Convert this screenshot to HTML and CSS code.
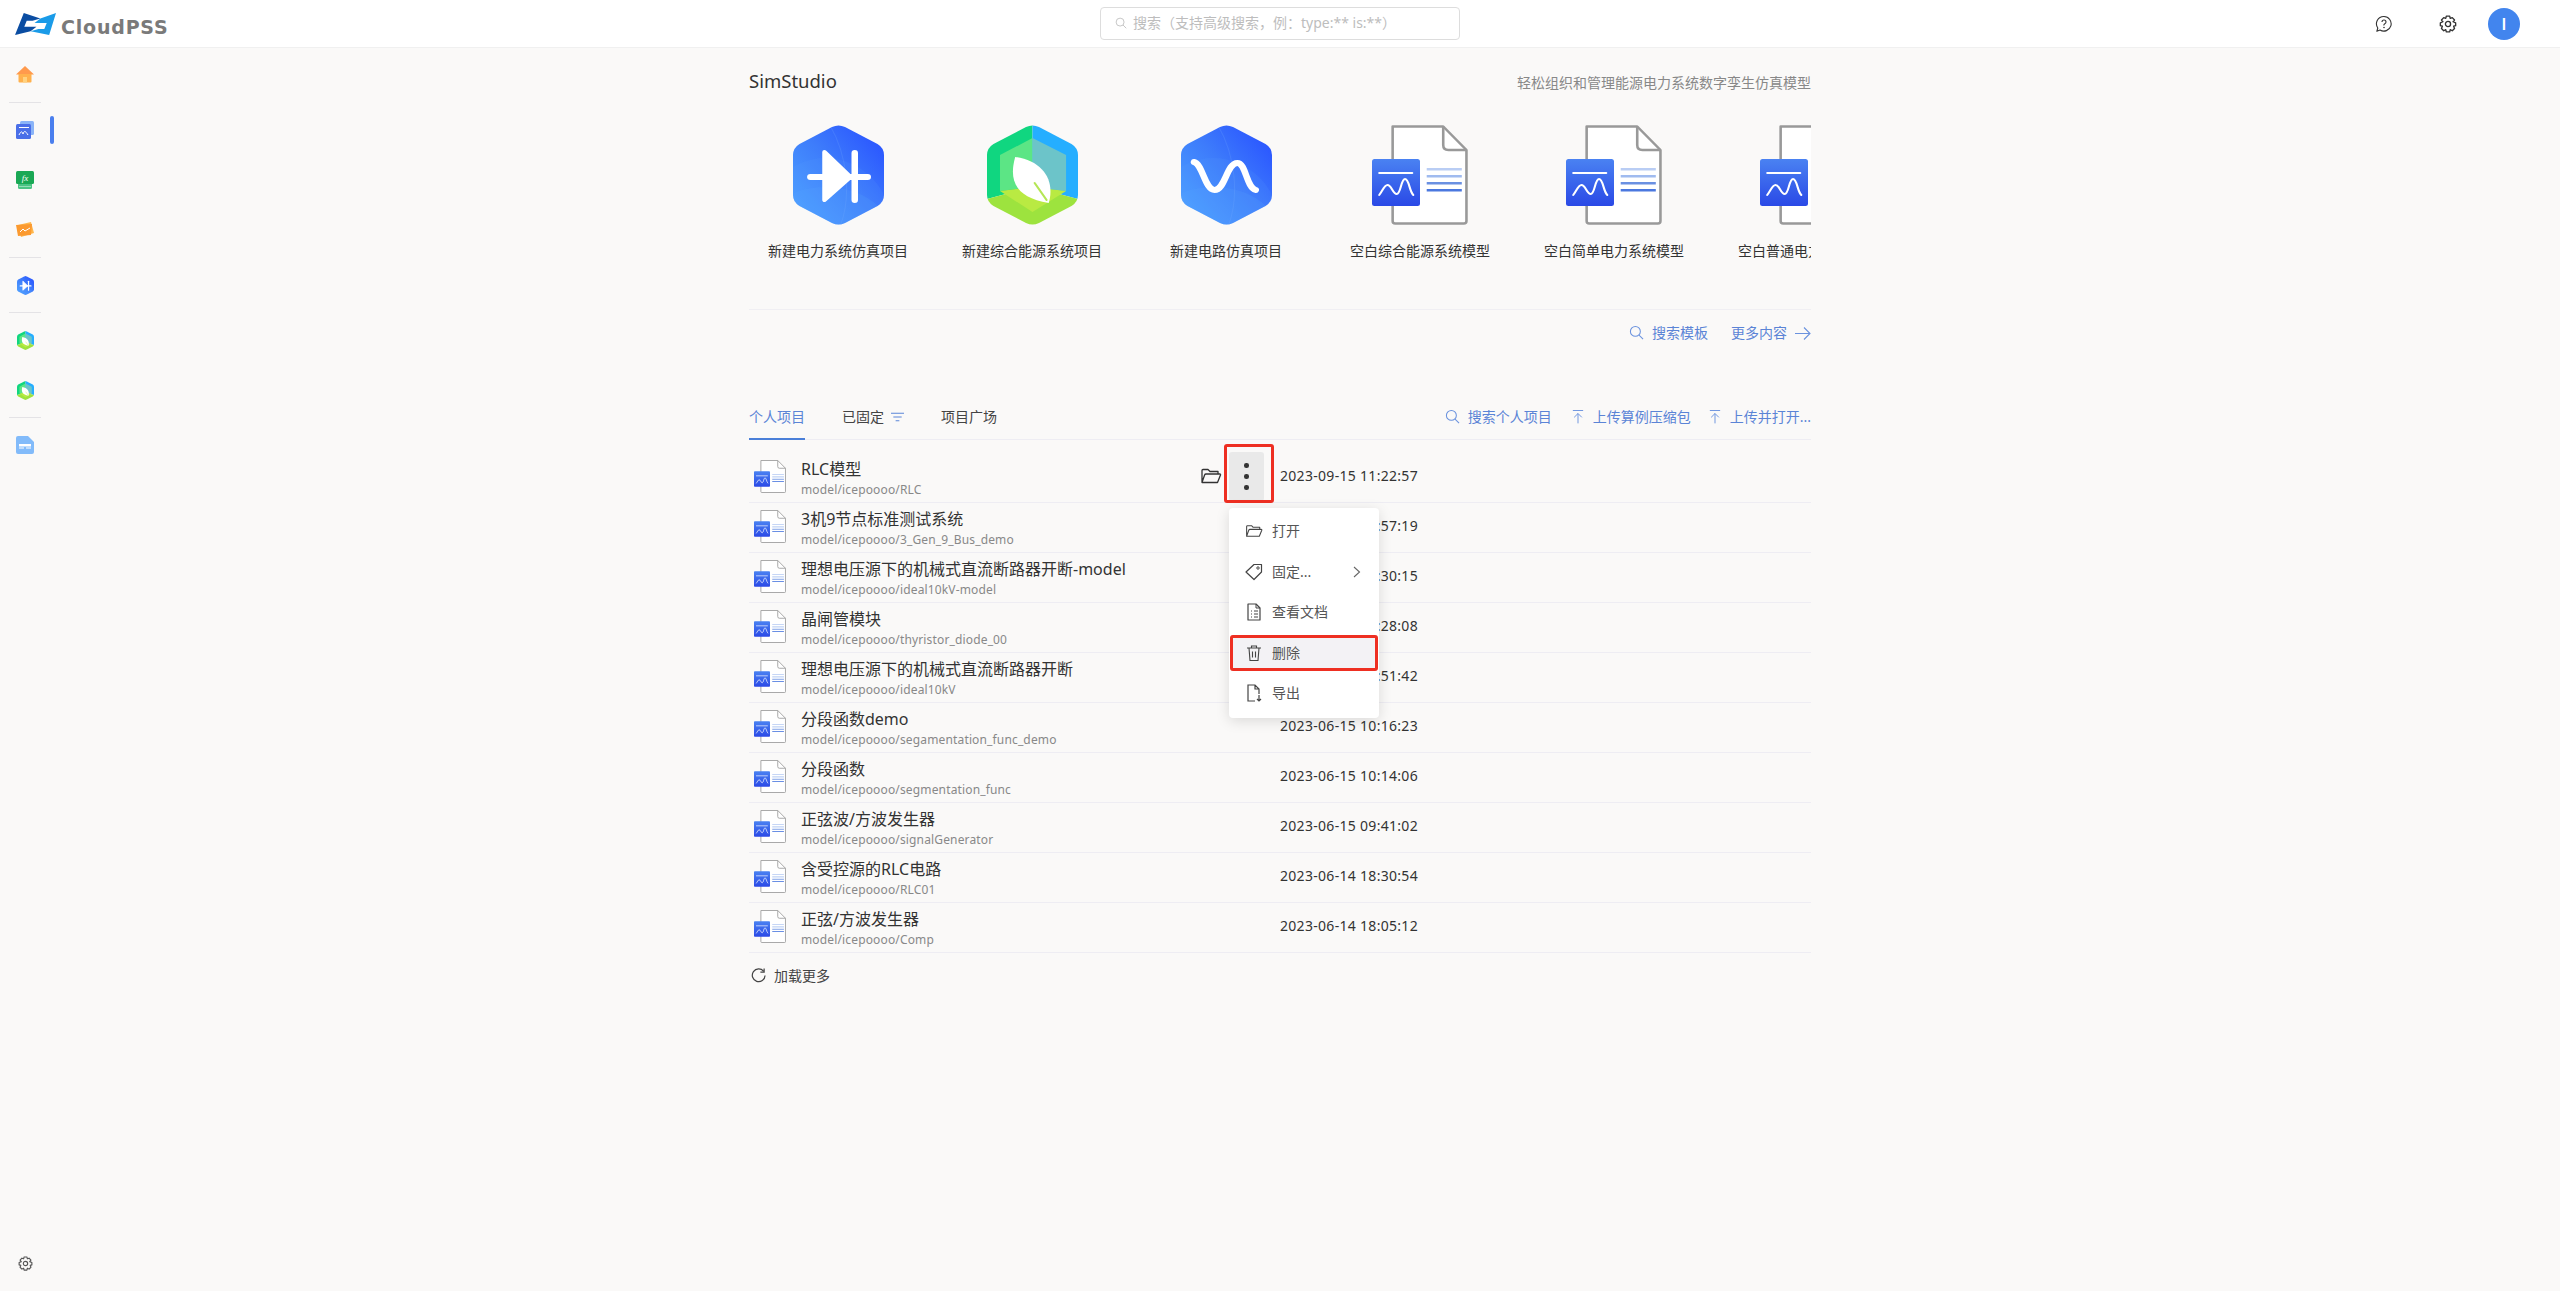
FILE: index.html
```html
<!DOCTYPE html>
<html lang="zh-CN">
<head>
<meta charset="utf-8">
<title>CloudPSS SimStudio</title>
<link rel="stylesheet" href="styles.css">
</head>
<body>
<svg class="defs" width="0" height="0" aria-hidden="true">
  <defs>
    <linearGradient id="gBlue" x1="0.1" y1="0.9" x2="0.9" y2="0.15"><stop offset="0" stop-color="#4b9dff"/><stop offset="0.55" stop-color="#3d7bfb"/><stop offset="1" stop-color="#2c59ff"/></linearGradient>
    <linearGradient id="gSquare" x1="0" y1="0" x2="0" y2="1"><stop offset="0" stop-color="#4a82f2"/><stop offset="1" stop-color="#2a49e6"/></linearGradient>
    <clipPath id="hexClip"><path d="M36 2Q42-1 48 2L78 19Q84 23 84 30V70Q84 77 78 81L48 98Q42 101 36 98L6 81Q0 77 0 70V30Q0 23 6 19Z"/></clipPath>
    <symbol id="hexBase" viewBox="0 0 84 100" preserveAspectRatio="none">
      <g clip-path="url(#hexClip)">
        <rect width="84" height="100" fill="url(#gBlue)"/>
        <ellipse cx="30" cy="105" rx="62" ry="72" fill="#5aa0ff" opacity=".13"/>
        <ellipse cx="30" cy="112" rx="62" ry="50" fill="#5aa8ff" opacity=".18"/>
        <path d="M34 0C50 30 54 70 44 100" fill="none" stroke="#7ab0ff" stroke-width="1" opacity=".2"/>
      </g>
    </symbol>
    <symbol id="hexDiode" viewBox="0 0 84 100" preserveAspectRatio="none">
      <use href="#hexBase" width="84" height="100"/>
      <path d="M16 52H69" stroke="#fff" stroke-width="6" stroke-linecap="round"/>
      <path d="M29 27L53 52L29 75Z" fill="#fff" stroke="#fff" stroke-width="4" stroke-linejoin="round"/>
      <path d="M57 28V75" stroke="#fff" stroke-width="6" stroke-linecap="round"/>
    </symbol>
    <symbol id="hexWave" viewBox="0 0 84 100" preserveAspectRatio="none">
      <use href="#hexBase" width="84" height="100"/>
      <path d="M12 37C20 39 22 65 31 65C41 65 42 38 52 38C60 38 60 62 69 65" fill="none" stroke="#fff" stroke-width="6" stroke-linecap="round"/>
    </symbol>
    <symbol id="hexLeaf" viewBox="0 0 84 100" preserveAspectRatio="none">
      <g clip-path="url(#hexClip)">
        <path d="M42 0H0V74L42 62Z" fill="#10d680"/>
        <path d="M42 0H84V74L42 62Z" fill="#25aeff"/>
        <path d="M0 74L42 62L84 74V100H0Z" fill="#9de33e"/>
        <path d="M42 13L12 30V66L42 62Z" fill="#5ce585"/>
        <path d="M42 13L73 30V66L42 62Z" fill="#6cc4c9"/>
        <path d="M12 66L42 62L73 66L42 87Z" fill="#b9ea42"/>
      </g>
      <path d="M26 32C20 56 26 72 57 78C63 56 52 36 26 32Z" fill="#fff"/>
      <path d="M44 58L55 75" stroke="#b5e655" stroke-width="2" stroke-linecap="round"/>
    </symbol>
    <symbol id="fileDoc" viewBox="0 0 93 100" preserveAspectRatio="none">
      <path d="M20 1.500H69L91.500 25V96Q91.500 98.500 89 98.500H22.500Q20 98.500 20 96Z" fill="#fff" stroke="#999" stroke-width="2.500" stroke-linejoin="round"/>
      <path d="M69 1.500V20Q69 25 74 25H91.500" fill="none" stroke="#999" stroke-width="2.500"/>
      <rect x="53" y="43" width="34" height="2.500" fill="#b9cdf4"/>
      <rect x="53" y="50" width="34" height="2.500" fill="#a0bbef"/>
      <rect x="53" y="57" width="34" height="2.500" fill="#6a90e2"/>
      <rect x="53" y="64" width="34" height="2.500" fill="#4b78df"/>
      <rect x="0" y="34" width="46.500" height="47" rx="2.500" fill="url(#gSquare)"/>
      <path d="M7 48H39" stroke="#fff" stroke-width="2" stroke-linecap="round"/>
      <path d="M7 70C10 66 12 60 15 60C19 60 20 69 24 69C28 69 28 54 32 54C36 54 36 66 40 70" fill="none" stroke="#fff" stroke-width="2" stroke-linecap="round"/>
    </symbol>
    <symbol id="searchIco" viewBox="0 0 16 16"><circle cx="6.800" cy="6.800" r="5.300" fill="none" stroke="currentColor" stroke-width="1.100"/><path d="M10.700 10.700L15 15" stroke="currentColor" stroke-width="1.100"/></symbol>
    <symbol id="uploadIco" viewBox="0 0 14 16"><path d="M1 1H13M7 4.500V16M2.500 9L7 4.500L11.500 9" fill="none" stroke="currentColor" stroke-width="1.100"/></symbol>
    <symbol id="folderIco" viewBox="0 0 22 16"><path d="M2 14.500V2.500Q2 1.500 3 1.500H8L10 3.500H18V6M2 14.500H17.500L20.500 7Q20.800 6 19.800 6H6Q5 6 4.600 7L2 14.500Z" fill="none" stroke="currentColor" stroke-width="1.300" stroke-linejoin="round"/></symbol>
    <symbol id="gearIco" viewBox="0 0 16 16"><path d="M6.500 1H9.500L10 3L11.800 2.300L13.800 4.500L12.500 6L14.800 7V9.500L13 10L13.800 12L11.800 14L10 13L9.500 15H6.500L6 13L4.200 14L2.200 12L3 10L1.200 9.500V7L3.500 6L2.200 4.500L4.200 2.300L6 3Z" fill="none" stroke="currentColor" stroke-width="1.200" stroke-linejoin="round"/><circle cx="8" cy="8" r="2.300" fill="none" stroke="currentColor" stroke-width="1.200"/></symbol>
  </defs>
</svg>

<header class="topbar">
  <div class="brand">
    <svg class="brand-mark" viewBox="0 0 42 24" preserveAspectRatio="none"><path d="M0 24L9 0L26 6L18 8.500H12L9.500 15H22L16 20Z" fill="#0b4da2"/><path d="M42 0L35 24L16 20L24 17.500H30L32.500 11H20L26 6Z" fill="#1a9be8"/></svg>
    <span class="brand-name">CloudPSS</span>
  </div>
  <div class="search-box">
    <svg class="search-ico"><use href="#searchIco"/></svg>
    <span>搜索（支持高级搜索，例：type:** is:**）</span>
  </div>
  <div class="top-actions">
    <svg class="top-ico" viewBox="0 0 18 18"><path d="M9 1.500A7.300 7.300 0 1 1 5 15L1.800 16.300L2.800 13A7.300 7.300 0 0 1 9 1.500Z" fill="none" stroke="#333" stroke-width="1.100" stroke-linejoin="round"/><path d="M7 7Q7 5 9 5T11 7Q11 8.200 9.800 8.800T9 10.500" fill="none" stroke="#333" stroke-width="1.100"/><circle cx="9" cy="12.500" r=".8" fill="#333"/></svg>
    <svg class="top-ico gear-top"><use href="#gearIco"/></svg>
    <div class="avatar">I</div>
  </div>
</header>

<div class="layout">
  <aside class="sidebar">
    <div class="side-group">
      <div class="side-item"><svg class="side-ico" viewBox="0 0 18 18"><path d="M9 0L18 8.500H0Z" fill="#ff9a4d"/><path d="M2.500 8H15.500V15.500Q15.500 16.500 14.500 16.500H3.500Q2.500 16.500 2.500 15.500Z" fill="#ffb14d"/><rect x="7" y="11" width="4" height="5.500" fill="#ffd27f"/></svg></div>
    </div>
    <div class="side-group">
      <div class="side-item active"><svg class="side-ico" viewBox="0 0 18 18"><rect x="4" y="0" width="14" height="14" rx="1.500" fill="#8ab4f8"/><rect x="0" y="3" width="15" height="15" rx="1.500" fill="#4a6fe8"/><path d="M3 6.500H13M3 14C5 10 6 10 7 13C8 10 9 9 12 14" fill="none" stroke="#fff" stroke-width="1"/></svg></div>
      <div class="side-item"><svg class="side-ico" viewBox="0 0 18 18"><rect x="2" y="6" width="14" height="12" rx="1.500" fill="#4bc484"/><rect x="0" y="0" width="18" height="13" rx="1.500" fill="#1aa855"/><path d="M3 15.500H15" stroke="#a8e4c4" stroke-width=".8"/><text x="9" y="10" class="fx">fx</text></svg></div>
      <div class="side-item"><svg class="side-ico" viewBox="0 0 18 18"><path d="M2 4L15 1L18 12L5 16Z" fill="#ffb84d"/><path d="M0 4L16 3L15 14L2 15Z" fill="#fb9a30"/><path d="M4 11L7 8L9 10L14 7" fill="none" stroke="#fff" stroke-width="1"/></svg></div>
    </div>
    <div class="side-group">
      <div class="side-item"><svg class="side-ico hex"><use href="#hexDiode"/></svg></div>
    </div>
    <div class="side-group">
      <div class="side-item"><svg class="side-ico hex"><use href="#hexLeaf"/></svg></div>
      <div class="side-item"><svg class="side-ico hex"><use href="#hexLeaf"/></svg></div>
    </div>
    <div class="side-group">
      <div class="side-item"><svg class="side-ico" viewBox="0 0 18 18"><path d="M2 0H12L18 6V16Q18 18 16 18H2Q0 18 0 16V2Q0 0 2 0Z" fill="#82bbfa"/><rect x="3" y="8" width="12" height="2.500" fill="#fff"/><path d="M3 12H8M10 12H15" stroke="#fff" stroke-width="1"/></svg></div>
    </div>
    <div class="side-bottom"><svg class="side-gear"><use href="#gearIco"/></svg></div>
  </aside>

  <main class="main">
    <div class="content">
      <div class="hero-head">
        <h1>SimStudio</h1>
        <p>轻松组织和管理能源电力系统数字孪生仿真模型</p>
      </div>
      <div class="tiles">
        <div class="tile"><svg class="tile-hex"><use href="#hexDiode"/></svg><span>新建电力系统仿真项目</span></div>
        <div class="tile"><svg class="tile-hex"><use href="#hexLeaf"/></svg><span>新建综合能源系统项目</span></div>
        <div class="tile"><svg class="tile-hex"><use href="#hexWave"/></svg><span>新建电路仿真项目</span></div>
        <div class="tile"><svg class="tile-file"><use href="#fileDoc"/></svg><span>空白综合能源系统模型</span></div>
        <div class="tile"><svg class="tile-file"><use href="#fileDoc"/></svg><span>空白简单电力系统模型</span></div>
        <div class="tile"><svg class="tile-file"><use href="#fileDoc"/></svg><span>空白普通电力系统模型</span></div>
      </div>
      <div class="links-row">
        <a class="link"><svg class="i16"><use href="#searchIco"/></svg><span>搜索模板</span></a>
        <a class="link"><span>更多内容</span><svg class="i16 arrow" viewBox="0 0 16 14"><path d="M0 7H15M9 1L15 7L9 13" fill="none" stroke="currentColor" stroke-width="1.100"/></svg></a>
      </div>
      <div class="tabs-row">
        <div class="tabs">
          <a class="tab on">个人项目</a>
          <a class="tab">已固定<svg class="filter" viewBox="0 0 14 10"><path d="M0 1H14M2.500 5H11.500M5 9H9" stroke="#5b86d8" stroke-width="1.200"/></svg></a>
          <a class="tab">项目广场</a>
        </div>
        <div class="tab-actions">
          <a class="link search-link"><svg class="i16"><use href="#searchIco"/></svg><span>搜索个人项目</span></a>
          <a class="link upload"><svg class="i14"><use href="#uploadIco"/></svg><span>上传算例压缩包</span></a>
          <a class="link upload"><svg class="i14"><use href="#uploadIco"/></svg><span>上传并打开...</span></a>
        </div>
      </div>

      <div class="list">
        <div class="row"><svg class="row-ico"><use href="#fileDoc"/></svg><div class="row-text"><b>RLC模型</b><small>model/icepoooo/RLC</small></div>
          <svg class="row-folder"><use href="#folderIco"/></svg>
          <div class="kebab"><i></i><i></i><i></i></div>
          <time>2023-09-15 11:22:57</time>
        </div>
        <div class="row"><svg class="row-ico"><use href="#fileDoc"/></svg><div class="row-text"><b>3机9节点标准测试系统</b><small>model/icepoooo/3_Gen_9_Bus_demo</small></div><time>2023-09-14 16:57:19</time></div>
        <div class="row"><svg class="row-ico"><use href="#fileDoc"/></svg><div class="row-text"><b>理想电压源下的机械式直流断路器开断-model</b><small>model/icepoooo/ideal10kV-model</small></div><time>2023-07-20 14:30:15</time></div>
        <div class="row"><svg class="row-ico"><use href="#fileDoc"/></svg><div class="row-text"><b>晶闸管模块</b><small>model/icepoooo/thyristor_diode_00</small></div><time>2023-07-11 09:28:08</time></div>
        <div class="row"><svg class="row-ico"><use href="#fileDoc"/></svg><div class="row-text"><b>理想电压源下的机械式直流断路器开断</b><small>model/icepoooo/ideal10kV</small></div><time>2023-06-20 15:51:42</time></div>
        <div class="row"><svg class="row-ico"><use href="#fileDoc"/></svg><div class="row-text"><b>分段函数demo</b><small>model/icepoooo/segamentation_func_demo</small></div><time>2023-06-15 10:16:23</time></div>
        <div class="row"><svg class="row-ico"><use href="#fileDoc"/></svg><div class="row-text"><b>分段函数</b><small>model/icepoooo/segmentation_func</small></div><time>2023-06-15 10:14:06</time></div>
        <div class="row"><svg class="row-ico"><use href="#fileDoc"/></svg><div class="row-text"><b>正弦波/方波发生器</b><small>model/icepoooo/signalGenerator</small></div><time>2023-06-15 09:41:02</time></div>
        <div class="row"><svg class="row-ico"><use href="#fileDoc"/></svg><div class="row-text"><b>含受控源的RLC电路</b><small>model/icepoooo/RLC01</small></div><time>2023-06-14 18:30:54</time></div>
        <div class="row"><svg class="row-ico"><use href="#fileDoc"/></svg><div class="row-text"><b>正弦/方波发生器</b><small>model/icepoooo/Comp</small></div><time>2023-06-14 18:05:12</time></div>
      </div>
      <a class="load-more"><svg class="reload" viewBox="0 0 16 16"><path d="M13.500 3.500A6.800 6.800 0 1 0 15 8" fill="none" stroke="#444" stroke-width="1.300"/><path d="M14 .5V4.500H10" fill="none" stroke="#444" stroke-width="1.300"/></svg><span>加载更多</span></a>

      <div class="annot annot-kebab"></div>
      <div class="menu">
        <div class="menu-item"><svg class="m-ico"><use href="#folderIco"/></svg><span>打开</span></div>
        <div class="menu-item"><svg class="m-ico" viewBox="0 0 18 18"><path d="M1 9L9 1.500H16.500V9L9 16.500Z" fill="none" stroke="currentColor" stroke-width="1.200" stroke-linejoin="round"/><circle cx="13" cy="5" r="1.200" fill="none" stroke="currentColor"/></svg><span>固定...</span><svg class="chev" viewBox="0 0 8 12"><path d="M1 1L6.500 6L1 11" fill="none" stroke="#666" stroke-width="1.100"/></svg></div>
        <div class="menu-item"><svg class="m-ico" viewBox="0 0 18 18"><path d="M3 1H11L15 5V17H3Z" fill="none" stroke="currentColor" stroke-width="1.200" stroke-linejoin="round"/><path d="M11 1V5H15M6 8H7M9 8H13M6 11H7M9 11H13M6 14H7M9 14H13" fill="none" stroke="currentColor"/></svg><span>查看文档</span></div>
        <div class="menu-item hover"><svg class="m-ico" viewBox="0 0 18 18"><path d="M2 4H16M6.500 4V2H11.500V4M4 4L5 16.500H13L14 4M7.500 7.500V13.500M10.500 7.500V13.500" fill="none" stroke="currentColor" stroke-width="1.100"/></svg><span>删除</span></div>
        <div class="menu-item"><svg class="m-ico" viewBox="0 0 18 18"><path d="M10 17H3V1H10L14 5V10M10 1V5H14M14 11V17M12 15L14 17L16 15" fill="none" stroke="currentColor" stroke-width="1.200"/></svg><span>导出</span></div>
        <div class="annot annot-item"></div>
      </div>
    </div>
  </main>
</div>
</body>
</html>
```
FILE: styles.css
```css
* { box-sizing: border-box; }
html, body { margin: 0; height: 100%; }
body {
  height: 1291px;
  overflow: hidden;
  background: #faf9f8;
  color: #333;
  font: 14px/20px "Noto Sans", "Noto Sans CJK SC", sans-serif;
}
.defs { position: absolute; }
a { color: inherit; text-decoration: none; }

.topbar {
  height: 48px;
  display: grid;
  grid-template-columns: 1fr 360px 1fr;
  align-items: center;
  background: #fff;
  border-bottom: 1px solid #f0f0f0;
}
.brand { display: flex; align-items: center; padding-left: 15px; gap: 5px; }
.brand-mark { width: 41px; height: 22px; margin-top: 1px; }
.brand-name {
  font: 700 19px/22px "DejaVu Sans", sans-serif;
  color: #7a7a7a;
  letter-spacing: .8px;
  margin-top: 7px;
}
.search-box {
  height: 33px;
  margin-top: -1px;
  display: flex;
  align-items: center;
  gap: 6px;
  padding-left: 14px;
  background: #fff;
  border: 1px solid #ddd;
  border-radius: 4px;
  color: #bdbdbd;
  font-size: 14px;
  white-space: nowrap;
}
.search-ico { width: 12px; height: 12px; color: #bbb; }
.top-actions { display: flex; align-items: center; justify-content: flex-end; padding-right: 40px; }
.top-ico { width: 18px; height: 18px; color: #333; }
.gear-top { margin-left: 46px; }
.avatar {
  width: 32px;
  height: 32px;
  margin-left: 31px;
  border-radius: 50%;
  background: #4285ee;
  color: #fff;
  font: 500 17px/32px Roboto, sans-serif;
  text-align: center;
}

.layout { display: flex; height: 1243px; }
.sidebar { width: 50px; flex: none; display: flex; flex-direction: column; padding: 2px 0 0 9px; }
.side-group { width: 32px; padding: 0 0 2px; border-bottom: 1px solid #e4e3e6; margin-bottom: 2px; }
.side-group:nth-child(5) { border-bottom: 0; }
.side-item { height: 50px; display: flex; align-items: center; justify-content: center; position: relative; }
.side-ico { width: 18px; height: 18px; }
.side-ico.hex { width: 17px; height: 19px; }
.fx { fill: #fff; font: italic 9px "Liberation Serif", serif; text-anchor: middle; }
.side-item.active::after {
  content: "";
  position: absolute;
  left: 41px;
  top: 11px;
  width: 4px;
  height: 28px;
  border-radius: 2px;
  background: #4a7fee;
}
.side-bottom { margin-top: auto; height: 35px; display: flex; padding-left: 9px; }
.side-gear { width: 15px; height: 15px; color: #555; }

.main { flex: 1; padding-right: 50px; display: flex; justify-content: center; }
.content { position: relative; width: 1062px; }
.hero-head { height: 68px; padding-top: 19px; display: flex; justify-content: space-between; }
.hero-head h1 { margin: 0; font-size: 18.5px; font-weight: 400; line-height: 28px; color: #333; }
.hero-head p { margin: 6px 0 0; color: #888; }
.tiles {
  height: 185px;
  margin-top: 9px;
  display: flex;
  gap: 16px;
  overflow: hidden;
  border-bottom: 1px solid #f0eff3;
}
.tile { width: 178px; display: flex; flex-direction: column; align-items: center; flex: none; color: #333; }
.tile span { margin-top: 16px; white-space: nowrap; }
.tile-hex { width: 91px; height: 100px; }
.tile-file { width: 96px; height: 100px; }

.links-row { display: flex; justify-content: flex-end; gap: 23px; height: 97px; padding-top: 13px; }
.link { display: flex; align-items: flex-start; gap: 8px; color: #5b84d6; white-space: nowrap; }
.link.upload { gap: 9px; }
.link.search-link { margin-right: 2px; }
.i16 { width: 15px; height: 15px; margin-top: 2px; color: #6a92de; }
.arrow { width: 16px; margin-top: 3px; }
.i14 { width: 12px; height: 15px; margin-top: 2px; color: #6a92de; }

.tabs-row { height: 33px; display: flex; justify-content: space-between; border-bottom: 1px solid #eeedf3; }
.tabs { display: flex; gap: 37px; }
.tab { display: flex; align-items: flex-start; height: 33px; color: #444; }
.tab.on { color: #5b84d6; border-bottom: 2px solid #4a7fd8; }
.filter { width: 13px; height: 10px; margin: 5px 0 0 7px; }
.tab-actions { display: flex; gap: 18px; }

.list { padding-top: 13px; }
.row {
  height: 50px;
  display: flex;
  align-items: flex-start;
  border-bottom: 1px solid #eeedf3;
  position: relative;
}
.row-ico { width: 32px; height: 33px; margin: 7px 0 0 5px; flex: none; }
.row-text { margin-left: 15px; display: flex; flex-direction: column; white-space: nowrap; flex: none; }
.row-text b { font-size: 16px; font-weight: 400; line-height: 22px; margin-top: 5px; color: #333; }
.row-text small { font-size: 12px; line-height: 16px; margin-top: 2px; color: #888; letter-spacing: .15px; }
.row time { position: absolute; left: 531px; top: 13px; color: #333; letter-spacing: .3px; }
.row-folder { position: absolute; left: 451px; top: 15px; width: 22px; height: 16px; color: #333; }
.kebab {
  position: absolute;
  left: 480px;
  top: -1px;
  width: 35px;
  height: 49px;
  background: #e9e9e9;
  border-radius: 3px;
  display: flex;
  flex-direction: column;
  align-items: center;
  justify-content: center;
  gap: 6.500px;
}
.kebab i { width: 4.500px; height: 4.500px; border-radius: 50%; background: #333; }

.load-more { display: flex; align-items: center; gap: 8px; height: 46px; padding-left: 2px; color: #444; }
.reload { width: 15px; height: 15px; margin-top: -2px; }

.annot { position: absolute; border: 3px solid #ee2f22; border-radius: 3px; pointer-events: none; }
.annot-kebab { left: 475px; top: 396px; width: 50px; height: 59px; }
.menu {
  position: absolute;
  left: 480px;
  top: 460px;
  width: 150px;
  height: 210px;
  padding-top: 3px;
  background: #fff;
  border-radius: 4px;
  box-shadow: 0 3px 14px rgba(0, 0, 0, .13);
}
.menu-item { position: relative; height: 40.500px; display: flex; align-items: center; padding-left: 16px; color: #555; }
.menu-item.hover { background: #f3f2f5; margin: 2px 2px; padding-left: 14px; height: 36.500px; }
.m-ico { width: 18px; height: 18px; color: #444; flex: none; margin-right: 9px; }
.chev { position: absolute; right: 18px; width: 8px; height: 12px; }
.annot-item { left: 1px; top: 127px; width: 148px; height: 36px; }
```
